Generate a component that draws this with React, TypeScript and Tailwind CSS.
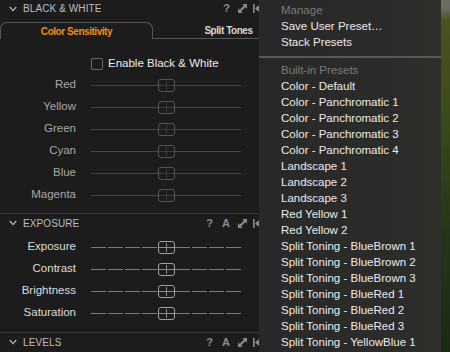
import React from "react";

const colorRows = ["Red", "Yellow", "Green", "Cyan", "Blue", "Magenta"];
const exposureRows = ["Exposure", "Contrast", "Brightness", "Saturation"];

const presets = [
  "Color - Default",
  "Color - Panchromatic 1",
  "Color - Panchromatic 2",
  "Color - Panchromatic 3",
  "Color - Panchromatic 4",
  "Landscape 1",
  "Landscape 2",
  "Landscape 3",
  "Red Yellow 1",
  "Red Yellow 2",
  "Split Toning - BlueBrown 1",
  "Split Toning - BlueBrown 2",
  "Split Toning - BlueBrown 3",
  "Split Toning - BlueRed 1",
  "Split Toning - BlueRed 2",
  "Split Toning - BlueRed 3",
  "Split Toning - YellowBlue 1",
];

function Chevron() {
  return (
    <svg width="8" height="6" viewBox="0 0 8 6" className="shrink-0">
      <path d="M0.8 1 L4 4.6 L7.2 1" fill="none" stroke="#b5b5b5" strokeWidth="1.3" />
    </svg>
  );
}

function ExpandIcon() {
  return (
    <svg width="9" height="9" viewBox="0 0 9 9" className="shrink-0">
      <polygon points="4.3,0 9,0 9,4.7" fill="#8c8c8c" />
      <polygon points="0,4.3 0,9 4.7,9" fill="#8c8c8c" />
      <path d="M2 7 L7 2" stroke="#8c8c8c" strokeWidth="2.2" />
    </svg>
  );
}

function EdgeIcon() {
  return (
    <svg width="8" height="9" viewBox="0 0 8 9" className="shrink-0">
      <rect x="0" y="0" width="1.6" height="9" fill="#8c8c8c" />
      <polygon points="2,4.5 6,1 6,8" fill="#8c8c8c" />
    </svg>
  );
}

function SectionHeader({ title, auto }: { title: string; auto?: boolean }) {
  return (
    <div className="flex items-center h-full pl-[9px]">
      <Chevron />
      <span className="ml-[6px] text-[10px] text-[#bdbdbd] tracking-[0.1px]">{title}</span>
      <div className="ml-auto flex items-center">
        <span className="text-[11px] font-bold text-[#8c8c8c]">?</span>
        {auto && <span className="ml-[9px] text-[11px] font-bold text-[#8c8c8c]">A</span>}
        <span className="ml-[8px] flex">
          <ExpandIcon />
        </span>
        <span className="ml-[6px] flex">
          <EdgeIcon />
        </span>
      </div>
    </div>
  );
}

function Slider({ label, active }: { label: string; active?: boolean }) {
  return (
    <div className="flex items-center h-[22px]">
      <div
        className={
          "w-[76px] text-right text-[11.5px] " + (active ? "text-[#dcdcdc]" : "text-[#a8a8a8]")
        }
      >
        {label}
      </div>
      <div className="relative ml-[15px] w-[150px] h-[13px] flex items-center">
        {active ? (
          <div className="w-full flex gap-[2px]">
            {Array.from({ length: 9 }).map((_, i) => (
              <div key={i} className="flex-1 h-px bg-[#7a7a7a]" />
            ))}
          </div>
        ) : (
          <div className="w-full h-px bg-[#454545]" />
        )}
        <div
          className={
            "absolute left-[67px] top-0 w-[17px] h-[13px] rounded-[3px] border bg-[#1c1c1c] flex items-center justify-center " +
            (active ? "border-[#a0a0a0]" : "border-[#555555]")
          }
        >
          <div className={"w-px h-[9px] " + (active ? "bg-[#8a8a8a]" : "bg-[#3c3c3c]")} />
          <div className={"absolute left-0 right-0 h-px " + (active ? "bg-[#8a8a8a]" : "bg-[#3c3c3c]")} />
        </div>
      </div>
    </div>
  );
}

export default function App() {
  return (
    <div className="relative w-[450px] h-[352px] overflow-hidden bg-[#1c1c1c] font-['Liberation_Sans',Arial,sans-serif]">
      <div className="flex h-full">
        <div className="w-[262px] shrink-0 flex flex-col overflow-hidden border-r border-[#111]">
          <div className="h-[17px]">
            <SectionHeader title="BLACK & WHITE" />
          </div>

          <div className="flex mt-[5px] h-[17px]">
            <div className="w-[153px] shrink-0 border border-b-0 border-[#575757] rounded-t-[7px] flex items-center justify-center">
              <span className="text-[10px] font-bold tracking-[-0.45px] text-[#ef8d1c]">Color Sensitivity</span>
            </div>
            <div className="w-[151px] shrink-0 border-b border-[#575757] flex items-center justify-center">
              <span className="text-[10px] font-bold tracking-[-0.45px] text-[#d8d8d8]">Split Tones</span>
            </div>
          </div>

          <div className="pt-[14px] pb-[7px]">
            <div className="flex items-center h-[21px] pl-[91px]">
              <div className="w-[12px] h-[12px] rounded-[2px] border border-[#6a6a6a]" />
              <span className="ml-[5px] text-[11.5px] text-[#ececec]">Enable Black &amp; White</span>
            </div>
            {colorRows.map((r) => (
              <Slider key={r} label={r} />
            ))}
          </div>

          <div className="border-t border-[#353535] h-[19px]">
            <SectionHeader title="EXPOSURE" auto />
          </div>
          <div className="pt-[4px] pb-[8px]">
            {exposureRows.map((r) => (
              <Slider key={r} label={r} active />
            ))}
          </div>

          <div className="border-t border-[#353535] h-[19px]">
            <SectionHeader title="LEVELS" auto />
          </div>
        </div>
        <div className="flex-1 bg-[linear-gradient(180deg,#6b6b64_0px,#6b6b64_8px,#4d5220_20px,#3a4a18_120px,#24341a_240px,#1c2a14_352px)]" />
      </div>

      <div className="absolute left-[259px] top-0 w-[182px] h-full bg-[linear-gradient(90deg,#282828,#2b2b2a_70%,#2e302a)] pt-[3px] text-[11.5px] text-[#ebebeb]">
        <div className="h-[16px] pl-[22px] flex items-center text-[#7b7b7b]">Manage</div>
        <div className="h-[16px] pl-[22px] flex items-center">Save User Preset…</div>
        <div className="h-[16px] pl-[22px] flex items-center">Stack Presets</div>
        <div className="mt-[5px] h-[2px] bg-[#595959]" />
        <div className="mt-[5px] h-[16px] pl-[22px] flex items-center text-[#7b7b7b]">Built-in Presets</div>
        {presets.map((p) => (
          <div key={p} className="h-[16px] pl-[22px] flex items-center">
            {p}
          </div>
        ))}
      </div>
    </div>
  );
}
